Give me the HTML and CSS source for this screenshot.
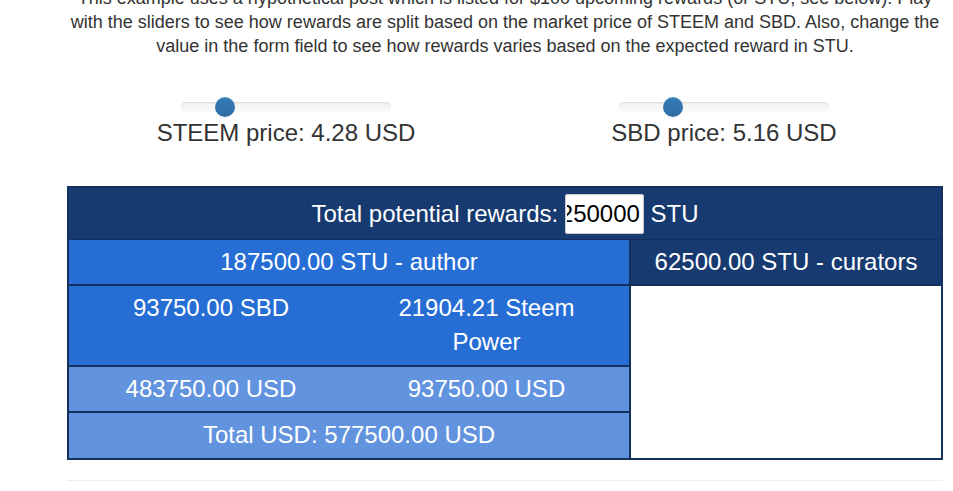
FILE: index.html
```html
<!DOCTYPE html>
<html lang="en">
<head>
<meta charset="utf-8">
<title>STU rewards</title>
<link rel="stylesheet" href="styles.css">
</head>
<body>
<div class="page">
  <p class="intro">This example uses a hypothetical post which is listed for <span class="money">$100</span> upcoming rewards (or STU, see below). Play with the sliders to see how rewards are split based on the market price of STEEM and SBD. Also, change the value in the form field to see how rewards varies based on the expected reward in STU.</p>

  <div class="sliders">
    <div class="slider-col">
      <div class="slider"><div class="thumb" style="left: 34px"></div></div>
      <div class="price">STEEM price: 4.28 USD</div>
    </div>
    <div class="slider-col">
      <div class="slider"><div class="thumb" style="left: 44px"></div></div>
      <div class="price">SBD price: 5.16 USD</div>
    </div>
  </div>

  <div class="rewards">
    <div class="total-row">Total potential rewards:&nbsp;<input class="stu-input" type="text" value="250000">&nbsp;STU</div>
    <div class="split">
      <div class="author">
        <div class="cell author-head">187500.00 STU - author</div>
        <div class="pair coins">
          <div class="cell sub-left">93750.00 SBD</div>
          <div class="cell sub-right">21904.21 Steem Power</div>
        </div>
        <div class="pair usd">
          <div class="cell sub-left">483750.00 USD</div>
          <div class="cell sub-right">93750.00 USD</div>
        </div>
        <div class="cell total-usd">Total USD: 577500.00 USD</div>
      </div>
      <div class="curators">
        <div class="cell curators-head">62500.00 STU - curators</div>
        <div class="curators-body"></div>
      </div>
    </div>
  </div>

  <hr class="rule">
</div>
</body>
</html>
```

FILE: styles.css
```css
html, body {
  margin: 0;
  padding: 0;
  background: #fff;
}

body {
  font-family: "Liberation Sans", Arial, sans-serif;
  color: #333;
}

.page {
  width: 876px;
  margin-left: 67px;
}

.intro {
  margin: -14px 0 0;
  font-size: 18px;
  line-height: 24px;
  text-align: center;
}

.sliders {
  display: grid;
  grid-template-columns: 1fr 1fr;
  margin-top: 44px;
}

.slider-col {
  display: flex;
  flex-direction: column;
  align-items: center;
}

.slider {
  position: relative;
  width: 210px;
  height: 10px;
  border-radius: 5px;
  background: linear-gradient(to bottom, #f3f3f3 0%, #f9f9f9 100%);
  box-shadow: inset 0 1px 2px rgba(0, 0, 0, 0.1);
}

.thumb {
  position: absolute;
  top: -5px;
  width: 20px;
  height: 20px;
  border-radius: 50%;
  background: linear-gradient(to bottom, #337ab7 0%, #2e6da4 100%);
  box-shadow: inset 0 1px 0 rgba(255, 255, 255, 0.2), 0 1px 2px rgba(0, 0, 0, 0.05);
}

.price {
  margin-top: 4px;
  font-size: 24px;
  line-height: 34px;
  color: #333;
}

.rewards {
  margin-top: 36px;
  border: 2px solid #14305c;
  color: #fff;
  font-size: 24px;
  line-height: 34px;
}

.total-row {
  display: flex;
  align-items: center;
  justify-content: center;
  height: 52px;
  box-sizing: border-box;
  background: #173a70;
  border-bottom: 1px solid #12305c;
}

.stu-input {
  width: 79px;
  height: 40px;
  box-sizing: border-box;
  border: 1px solid #ccc;
  border-radius: 2px;
  padding: 0 3px 0 1px;
  font-family: "Liberation Sans", Arial, sans-serif;
  font-size: 24px;
  color: #000;
  background: #fff;
  direction: rtl;
  outline: none;
}

.split {
  display: grid;
  grid-template-columns: 560px 1fr;
}

.author {
  display: flex;
  flex-direction: column;
}

.cell {
  padding: 5px 10px;
  text-align: center;
}

.author-head {
  background: #266dd4;
  border-bottom: 2px solid #14305c;
}

.pair {
  display: grid;
  grid-template-columns: 284px 1fr;
  border-bottom: 2px solid #14305c;
}

.coins {
  background: #266dd4;
}

.coins .cell {
  padding-bottom: 6px;
}

.usd {
  background: #6293de;
}

.sub-right {
  padding-left: 10px;
  padding-right: 19px;
}

.total-usd {
  background: #6293de;
  padding-bottom: 6px;
}

.curators {
  display: flex;
  flex-direction: column;
  border-left: 2px solid #14305c;
}

.curators-head {
  background: #173a70;
  border-bottom: 2px solid #14305c;
}

.curators-body {
  flex: 1;
  background: #fff;
}

.rule {
  margin: 20px 0 0;
  border: 0;
  border-top: 1px solid #eee;
}
```
